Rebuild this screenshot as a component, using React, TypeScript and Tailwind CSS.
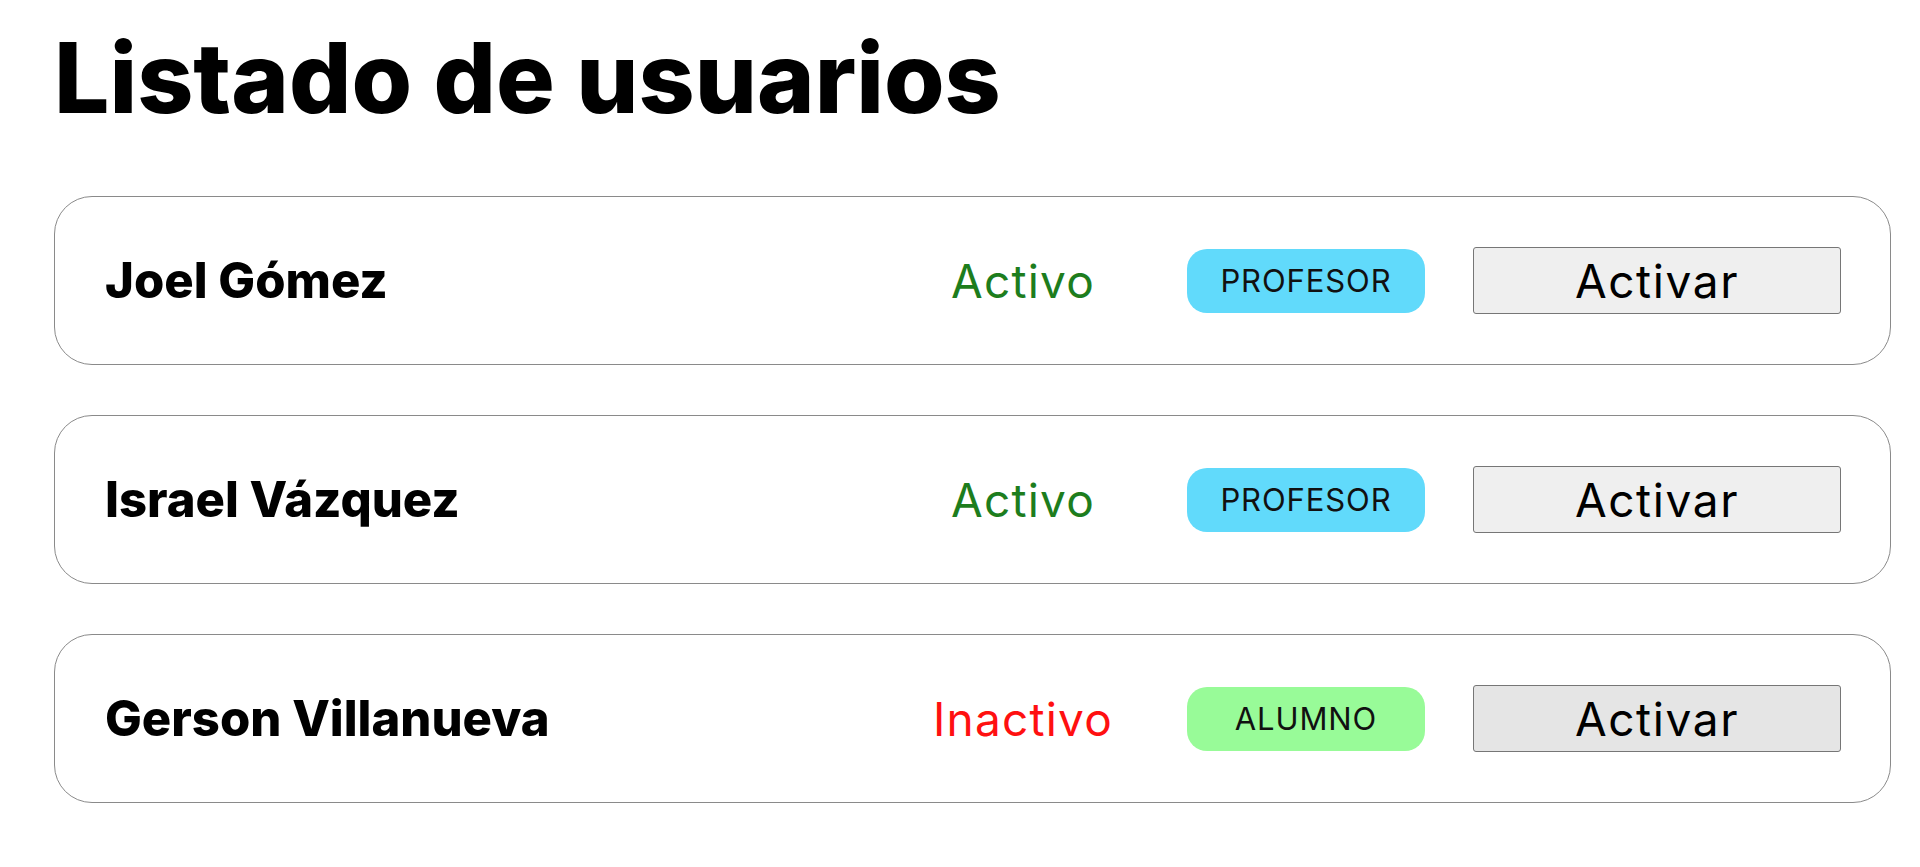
const usuarios = [
  { nombre: "Joel Gómez", activo: true, rol: "PROFESOR" },
  { nombre: "Israel Vázquez", activo: true, rol: "PROFESOR" },
  { nombre: "Gerson Villanueva", activo: false, rol: "ALUMNO" },
];

export default function App() {
  return (
    <div className="min-h-screen bg-white pl-[54px] pr-[29px] pt-[29px] font-['Inter',sans-serif] text-black">
      <h1 className="text-[98px] font-extrabold leading-none">Listado de usuarios</h1>

      <div className="mt-[69px] flex flex-col gap-[50px]">
        {usuarios.map((u, i) => (
          <div
            key={i}
            className="flex items-center rounded-[38px] border border-[#8a8a8a] py-[50px] pl-[50px] pr-[49px]"
          >
            <h3 className="flex-1 text-[49px] font-extrabold leading-none">{u.nombre}</h3>

            <span
              className={
                u.activo
                  ? "w-[232px] text-center text-[46px] leading-none tracking-[1.2px] text-[#1d7d1d]"
                  : "w-[232px] text-center text-[46px] leading-none tracking-[1.2px] text-[#ff1010]"
              }
            >
              {u.activo ? "Activo" : "Inactivo"}
            </span>

            <span
              className={
                u.rol === "PROFESOR"
                  ? "ml-[48px] flex h-[64px] w-[238px] items-center justify-center rounded-[20px] bg-[#61dafb] text-[31px] leading-none tracking-[0.9px] text-[#111]"
                  : "ml-[48px] flex h-[64px] w-[238px] items-center justify-center rounded-[20px] bg-[#98fb98] text-[31px] leading-none tracking-[0.9px] text-[#111]"
              }
            >
              {u.rol}
            </span>

            <button
              className={
                i === 2
                  ? "ml-[48px] h-[67px] w-[368px] rounded-[3px] border border-[#767676] bg-[#e5e5e5] text-[46px] leading-none tracking-[1.6px] text-black"
                  : "ml-[48px] h-[67px] w-[368px] rounded-[3px] border border-[#767676] bg-[#efefef] text-[46px] leading-none tracking-[1.6px] text-black"
              }
            >
              Activar
            </button>
          </div>
        ))}
      </div>
    </div>
  );
}
